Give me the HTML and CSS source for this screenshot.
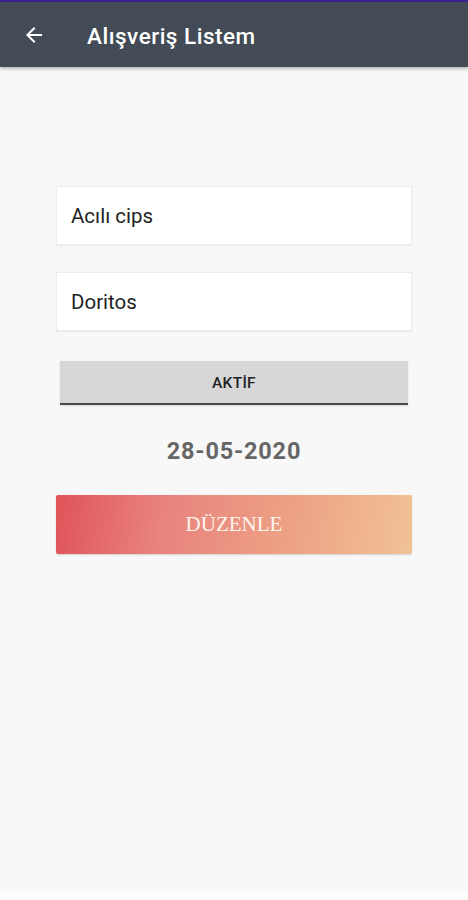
FILE: index.html
```html
<!DOCTYPE html>
<html lang="tr">
<head>
    <meta charset="UTF-8">
    <meta name="viewport" content="width=device-width, initial-scale=1.0">
    <title>Alışveriş Listem</title>
    <link rel="stylesheet" href="styles.css">
</head>
<body>
    <div class="status"></div>
    <div class="toolbar">
        <svg class="back" width="24" height="24" viewBox="0 0 24 24">
            <path d="M20 11H7.83l5.59-5.59L12 4l-8 8 8 8 1.41-1.41L7.83 13H20v-2z" fill="#fff"/>
        </svg>
        <span class="title">Alışveriş Listem</span>
    </div>

    <div class="content">
        <div class="field">Acılı cips</div>
        <div class="field">Doritos</div>
        <button class="toggle">AKTİF</button>
        <div class="date">28-05-2020</div>
        <button class="save">DÜZENLE</button>
    </div>

    <div class="navbar"></div>
</body>
</html>
```

FILE: styles.css
```css
body {
    margin: 0;
    height: 900px;
    display: flex;
    flex-direction: column;
    font-family: Roboto, "Noto Sans", sans-serif;
    background-color: #f8f8f8;
}

.status {
    height: 2px;
    background-color: #3b2190;
}

.toolbar {
    height: 65px;
    display: flex;
    align-items: center;
    background-color: #434b56;
    box-shadow: 0 2px 3px rgba(0, 0, 0, 0.25);
    color: white;
}

.back {
    margin-left: 22px;
    margin-top: 1px;
}

.title {
    margin-left: 41px;
    font-size: 22.5px;
    font-weight: 500;
    letter-spacing: 0.5px;
    margin-top: 2px;
}

.content {
    flex: 1;
    display: flex;
    flex-direction: column;
    padding: 119px 56px 0 56px;
}

.field {
    height: 57px;
    background: white;
    border: 1px solid #ececec;
    box-shadow: 0 1px 1px rgba(0, 0, 0, 0.05);
    display: flex;
    align-items: center;
    padding-left: 14px;
    font-size: 20.5px;
    color: #222;
    margin-bottom: 27px;
}

.toggle {
    margin: 3px 4px 0 4px;
    height: 44px;
    border: none;
    border-bottom: 2px solid #4a4a4a;
    background-color: #d7d7d7;
    font-family: Roboto, sans-serif;
    font-size: 15.5px;
    font-weight: 500;
    color: #222;
    letter-spacing: 0.3px;
    padding-top: 3px;
    box-shadow: 0 1px 2px rgba(0, 0, 0, 0.12);
}

.date {
    margin-top: 32px;
    text-align: center;
    font-size: 23.5px;
    font-weight: bold;
    color: #666;
    letter-spacing: 0.8px;
}

.save {
    margin-top: 30px;
    height: 59px;
    border: none;
    border-radius: 2px;
    background: linear-gradient(100deg, #e05458 0%, #e8837e 30%, #eda184 65%, #f1c295 100%);
    font-family: "Liberation Serif", serif;
    font-size: 21px;
    color: #fff5ee;
    box-shadow: 0 1px 2px rgba(0, 0, 0, 0.15);
}

.navbar {
    height: 8px;
    background-color: #fdfdfd;
}
```
